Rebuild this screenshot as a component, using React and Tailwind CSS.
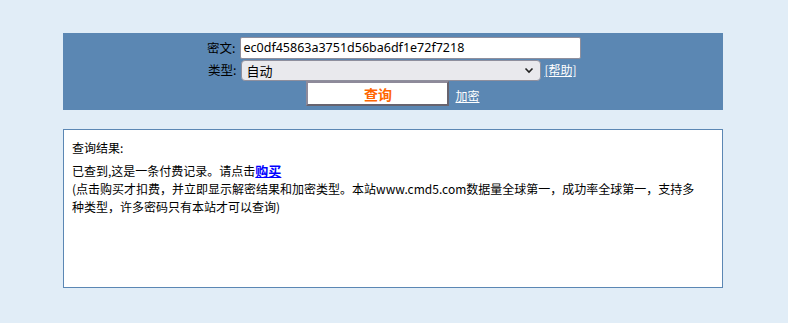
export default function App() {
  const f = { fontFamily: '"Noto Sans CJK SC", "Noto Sans", sans-serif' };
  return (
    <div className="w-[788px] h-[323px] bg-[#e1edf7] pt-[33px]" style={f}>
      <div className="ml-[63px] w-[660px] h-[77px] bg-[#5b87b3] flex flex-col items-center pt-[4px] text-[12px] text-black">
        <div className="flex items-center h-[22px] w-[375px]">
          <span className="w-[34px] text-right leading-none pr-[4px] text-[12.5px]">密文:</span>
          <div className="w-[341px] h-[22px] bg-white border border-[#8f8f9d] rounded-[2px] flex items-center px-[3px] text-[12.5px] leading-none" style={{ fontFamily: '"Noto Sans", sans-serif' }}>
            ec0df45863a3751d56ba6df1e72f7218
          </div>
        </div>
        <div className="flex items-center h-[22px] w-[375px]">
          <span className="w-[35px] text-right leading-none pr-[4px] text-[12.5px]">类型:</span>
          <div className="w-[300px] h-[21px] bg-[#e9e9ed] border border-[#8f8f9d] rounded-[4px] flex items-center justify-between pl-[5px] pr-[6px] text-[13px] leading-none">
            <span>自动</span>
            <svg width="10" height="7" viewBox="0 0 10 7"><path d="M1.5 1.5 L5 5 L8.5 1.5" stroke="#222" strokeWidth="1.6" fill="none" /></svg>
          </div>
          <a className="ml-[4px] text-white underline leading-none">[帮助]</a>
        </div>
        <div className="flex items-end h-[25px]">
          <button className="w-[143px] h-[25px] bg-white border-t-2 border-l-2 border-b-2 border-r-2 border-t-[#8e8a9a] border-l-[#8e8a9a] border-b-[#67636e] border-r-[#67636e] text-[#ff6600] font-bold text-[14px] leading-none" style={f}>查询</button>
          <a className="ml-[6px] mb-[4px] text-white underline leading-none">加密</a>
        </div>
      </div>
      <div className="ml-[63px] mt-[19px] w-[660px] h-[159px] bg-white border border-[#5b87b4] pl-[8px] pr-[18px] pt-[9px] text-[12px] text-black leading-[18px]">
        <div className="mb-[4px]">查询结果:</div>
        <div className="leading-[19px]">已查到,这是一条付费记录。请点击<a className="text-[#0000ff] font-bold underline text-[13px]">购买</a></div>
        <div>(点击购买才扣费，并立即显示解密结果和加密类型。本站www.cmd5.com数据量全球第一，成功率全球第一，支持多种类型，许多密码只有本站才可以查询)</div>
      </div>
    </div>
  );
}
